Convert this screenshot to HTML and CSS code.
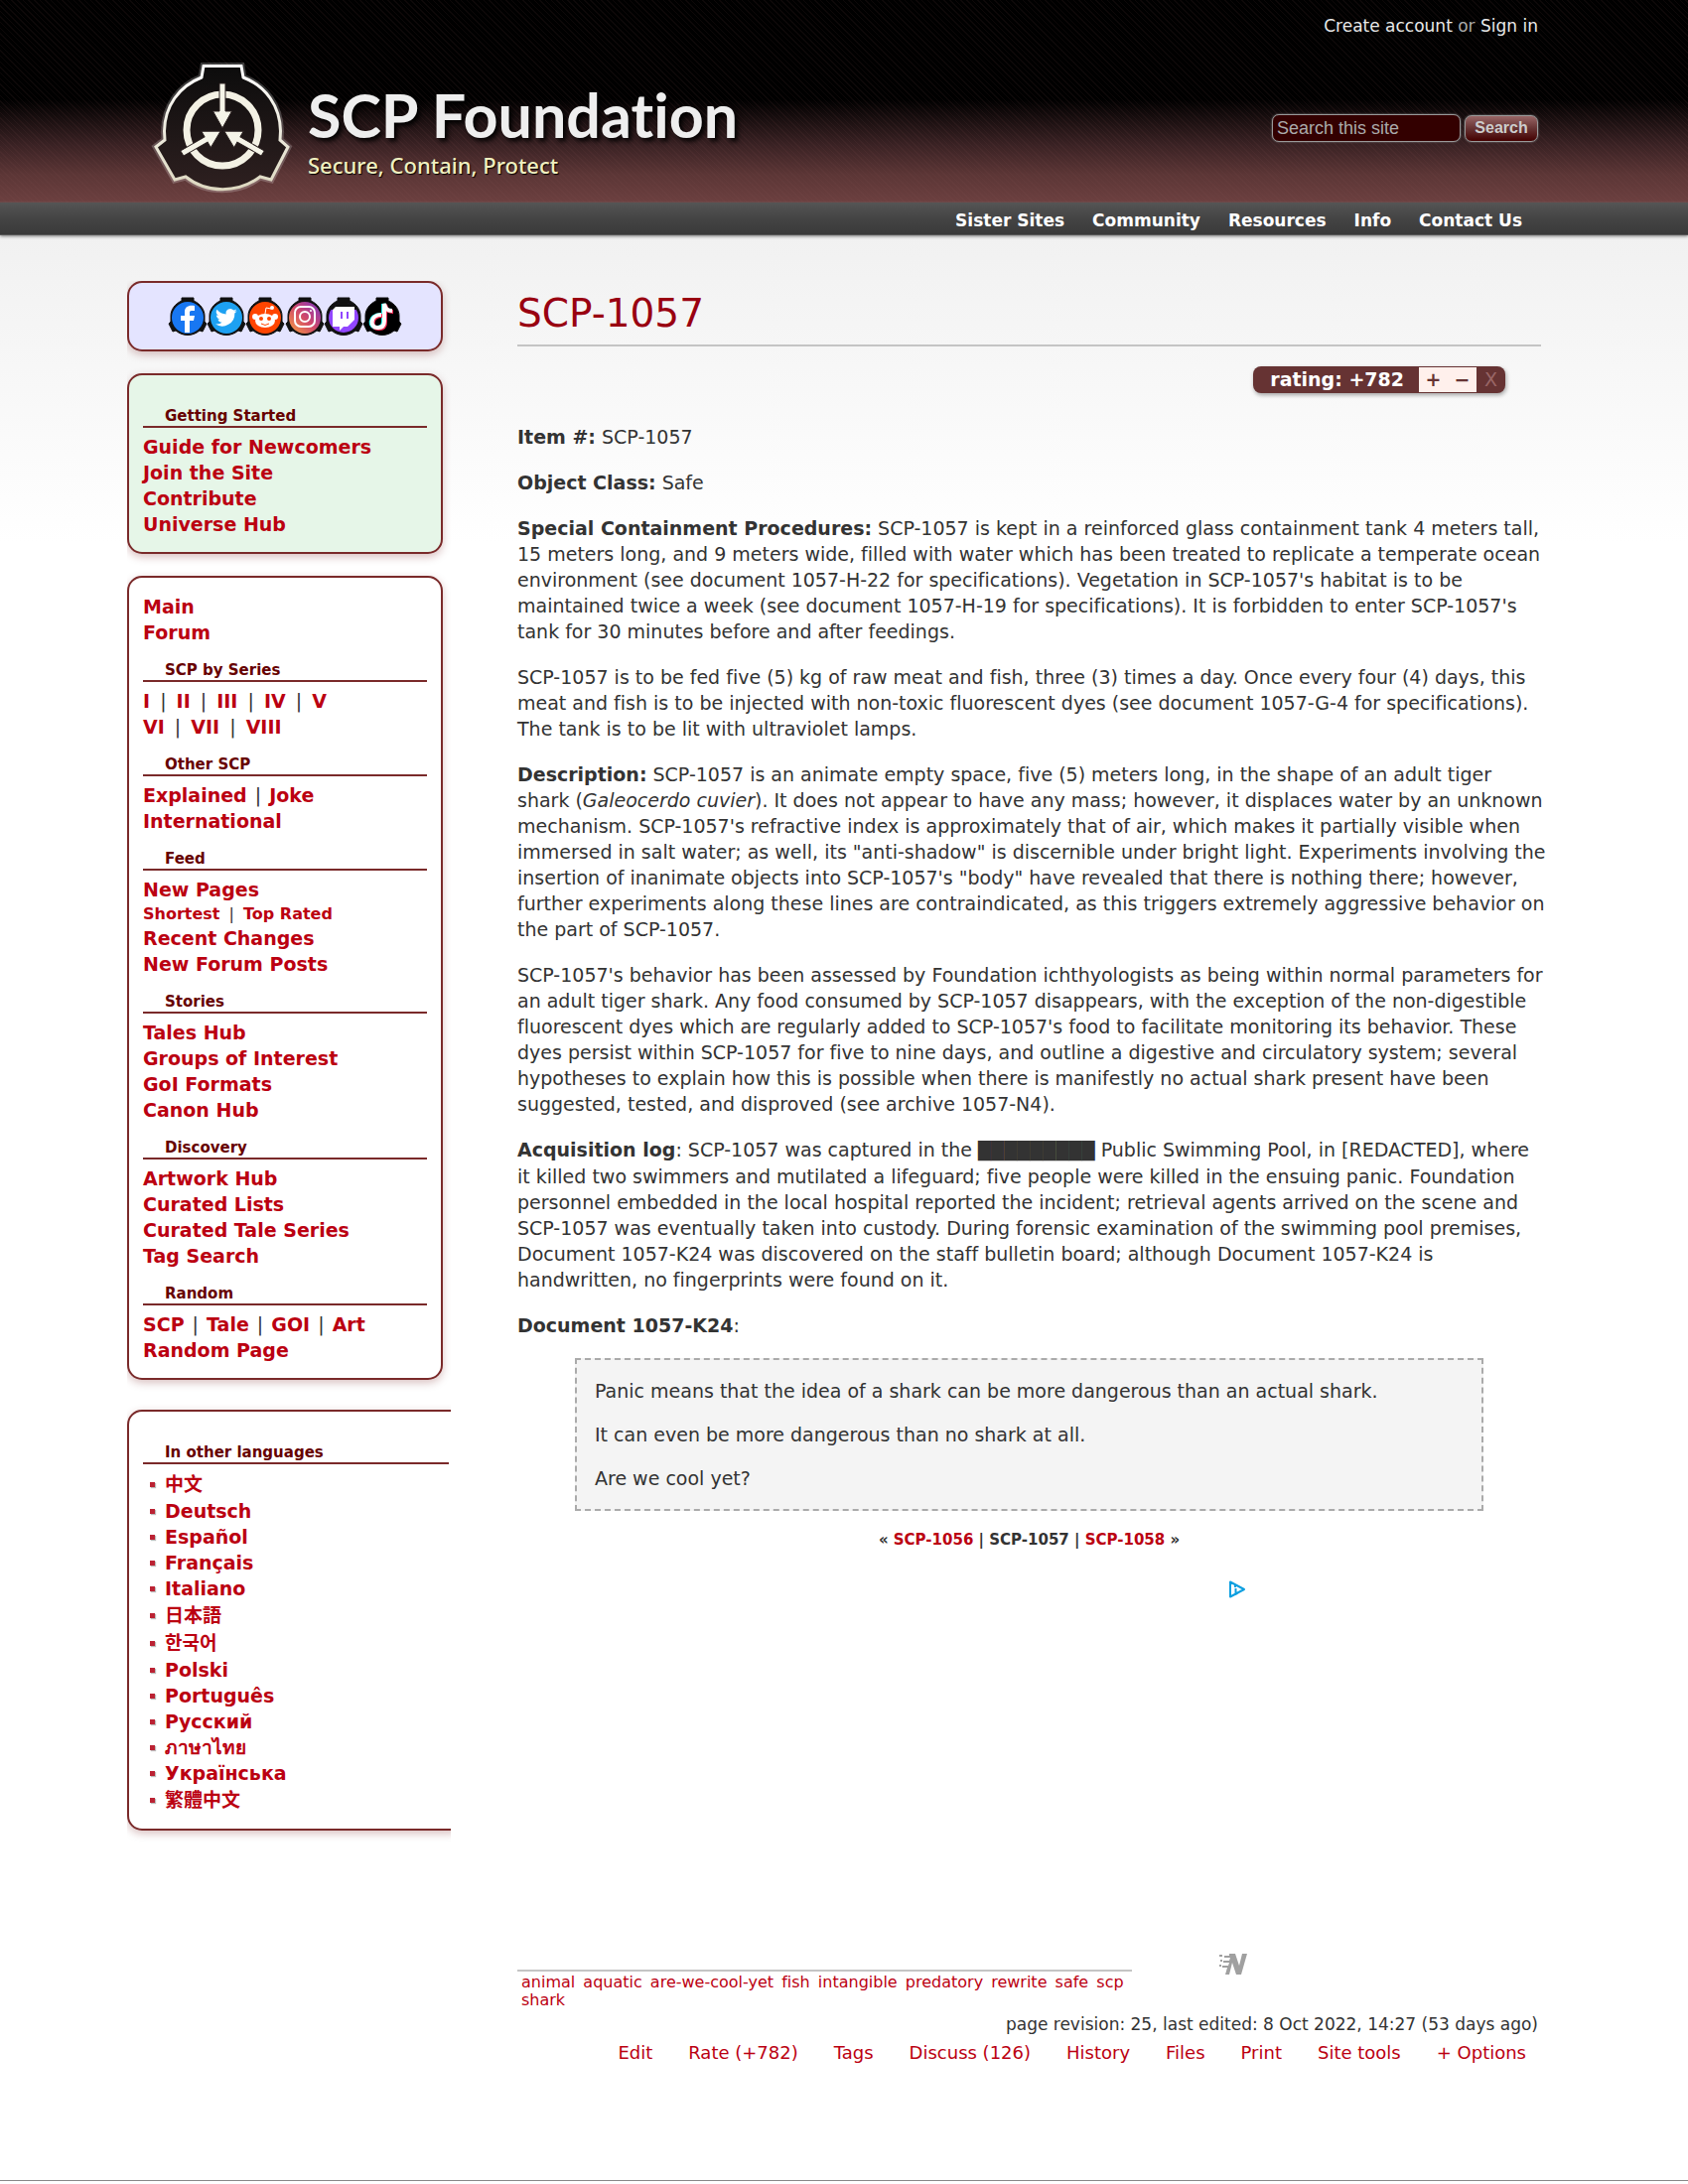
FILE: index.html
```html
<!DOCTYPE html>
<html lang="en">
<head>
<meta charset="utf-8">
<title>SCP-1057 - SCP Foundation</title>
<link rel="stylesheet" href="styles.css">
</head>
<body>
<header class="header">
  <div class="wrap header-inner">
    <a class="brand" href="#">
      <svg class="logo" viewBox="150 58 148 142" aria-hidden="true">
        <defs>
          <linearGradient id="lg" x1="0" y1="0" x2="0" y2="1"><stop offset="0" stop-color="#fff"/><stop offset="1" stop-color="#ddd8c0"/></linearGradient>
          <linearGradient id="lf" x1="0" y1="0" x2="0" y2="1"><stop offset="0" stop-color="#0c0c0c"/><stop offset="1" stop-color="#2e2020"/></linearGradient>
        </defs>
        <path d="M205 66.500H243L245 78C268 87 282 107 282.500 132L282 141L290 148L273 181L262 178C240 195 208 195 187 178L176 181L157 148L166 141L165.500 132C166 107 180 87 203 78Z" fill="none" stroke="#fff" stroke-opacity=".22" stroke-width="7"/>
        <path d="M205 66.500H243L245 78C268 87 282 107 282.500 132L282 141L290 148L273 181L262 178C240 195 208 195 187 178L176 181L157 148L166 141L165.500 132C166 107 180 87 203 78Z" fill="url(#lf)" stroke="url(#lg)" stroke-width="3"/>
        <circle cx="224" cy="131" r="36" fill="none" stroke="#f3f1e4" stroke-width="7"/>
        <g fill="#f5f4e8" stroke="#2a2020" stroke-width="1">
          <path d="M221 84h6v28h6.500L224 129l-9.500-17h6.500z"/>
          <path d="M221 84h6v28h6.500L224 129l-9.500-17h6.500z" transform="rotate(120 224 131)"/>
          <path d="M221 84h6v28h6.500L224 129l-9.500-17h6.500z" transform="rotate(240 224 131)"/>
        </g>
      </svg>
      <span class="brand-text">
        <span class="site-name">SCP Foundation</span>
        <span class="motto">Secure, Contain, Protect</span>
      </span>
    </a>
    <div class="header-side">
      <p class="account"><a href="#">Create account</a> or <a href="#">Sign in</a></p>
      <form class="search">
        <input type="text" class="search-box" aria-label="Search this site" placeholder="Search this site">
        <button type="button" class="search-btn">Search</button>
      </form>
    </div>
  </div>
</header>
<nav class="topbar">
  <div class="wrap topbar-inner">
    <a href="#">Sister Sites</a><a href="#">Community</a><a href="#">Resources</a><a href="#">Info</a><a href="#">Contact Us</a>
  </div>
</nav>
<div class="content">
<div class="wrap columns">
  <aside class="side">
    <section class="box social">
      <svg viewBox="0 0 236 40" class="icons" aria-label="Social media">
        <defs>
          <linearGradient id="ig" x1="1" y1="0" x2="0" y2="1"><stop offset="0" stop-color="#7a35c8"/><stop offset=".5" stop-color="#d0486a"/><stop offset="1" stop-color="#f9a040"/></linearGradient>
          <path id="sh" d="M14 1h12v3c7 3 11 9 11 15v6l2 2-4 8-3-1c-7 6-17 6-24 0l-3 1-4-8 2-2v-6c0-6 4-12 11-15z"/>
        </defs>
        <g fill="#111" stroke="#111" stroke-width="1">
          <use href="#sh"/><use href="#sh" x="39"/><use href="#sh" x="78"/><use href="#sh" x="118"/><use href="#sh" x="157"/><use href="#sh" x="196" fill="#000"/>
        </g>
        <circle cx="20" cy="21" r="16" fill="#1877f2"/><circle cx="59" cy="21" r="16" fill="#1da1f2"/><circle cx="98" cy="21" r="16" fill="#ff4500"/><circle cx="138" cy="21" r="16" fill="url(#ig)"/>
        <path d="M17 36V24h-4v-5h4v-4c0-5 4-7 10-6v5c-4 0-5 0-5 2v3h5l-1 5h-4v12z" fill="#fff"/>
        <path transform="translate(48 10) scale(.9)" d="M24 4.600a10 10 0 0 1-2.800.8 5 5 0 0 0 2.200-2.700 10 10 0 0 1-3.100 1.200 4.900 4.900 0 0 0-8.400 4.500A14 14 0 0 1 1.700 3.100a4.900 4.900 0 0 0 1.500 6.600 5 5 0 0 1-2.200-.6c0 2.300 1.600 4.400 3.900 4.900a5 5 0 0 1-2.200.1 4.900 4.900 0 0 0 4.600 3.400A10 10 0 0 1 0 19.500a14 14 0 0 0 21.500-12.400A10 10 0 0 0 24 4.600z" fill="#fff"/>
        <g fill="#fff"><ellipse cx="98" cy="24" rx="10" ry="7"/><circle cx="88" cy="20" r="3"/><circle cx="108" cy="20" r="3"/><circle cx="105" cy="11" r="2"/></g>
        <path d="M98 17l1-6 5 1" fill="none" stroke="#fff" stroke-width="1"/>
        <g fill="#ff4500"><circle cx="94" cy="22" r="2"/><circle cx="102" cy="22" r="2"/></g><path d="M94 27q4 3 8 0" fill="none" stroke="#ff4500"/>
        <g fill="none" stroke="#fff" stroke-width="2"><rect x="128" y="10" width="20" height="20" rx="6"/><circle cx="138" cy="20" r="5"/></g><circle cx="144" cy="14" r="1" fill="#fff"/>
        <circle cx="177" cy="21" r="15" fill="#9146ff"/><path d="M164 13a15 15 0 0 1 26 0z" fill="#111"/>
        <path d="M166 13l3-3h19v13l-7 7h-4l-4 4v-4h-7z" fill="#fff"/><path d="M175 15v7M181 15v7" stroke="#9146ff" stroke-width="2"/>
        <g fill="none" stroke-width="4"><path d="M214 18c-12 0-12 14-3 13 5 0 6-3 6-7V7c1 5 3 7 8 7" stroke="#25f4ee"/><path d="M216 19c-12 0-12 14-3 13 5 0 6-3 6-7V8c1 5 3 7 8 7" stroke="#fe2c55"/><path d="M215 18c-12 0-12 14-3 13 5 0 6-3 6-7V7c1 5 3 7 8 7" stroke="#fff"/></g>
      </svg>
    </section>
    <section class="box started">
      <h2>Getting Started</h2>
      <a href="#">Guide for Newcomers</a><br><a href="#">Join the Site</a><br><a href="#">Contribute</a><br><a href="#">Universe Hub</a>
    </section>
    <section class="box main-menu">
      <a href="#">Main</a><br><a href="#">Forum</a>
      <h2>SCP by Series</h2>
      <div class="series"><a href="#">I</a> <span class="sep">|</span> <a href="#">II</a> <span class="sep">|</span> <a href="#">III</a> <span class="sep">|</span> <a href="#">IV</a> <span class="sep">|</span> <a href="#">V</a><br><a href="#">VI</a> <span class="sep">|</span> <a href="#">VII</a> <span class="sep">|</span> <a href="#">VIII</a></div>
      <h2>Other SCP</h2>
      <a href="#">Explained</a> <span class="sep">|</span> <a href="#">Joke</a><br><a href="#">International</a>
      <h2>Feed</h2>
      <a href="#">New Pages</a>
      <div class="small"><a href="#">Shortest</a> <span class="sep">|</span> <a href="#">Top Rated</a></div>
      <a href="#">Recent Changes</a><br><a href="#">New Forum Posts</a>
      <h2>Stories</h2>
      <a href="#">Tales Hub</a><br><a href="#">Groups of Interest</a><br><a href="#">GoI Formats</a><br><a href="#">Canon Hub</a>
      <h2>Discovery</h2>
      <a href="#">Artwork Hub</a><br><a href="#">Curated Lists</a><br><a href="#">Curated Tale Series</a><br><a href="#">Tag Search</a>
      <h2>Random</h2>
      <a href="#">SCP</a> <span class="sep">|</span> <a href="#">Tale</a> <span class="sep">|</span> <a href="#">GOI</a> <span class="sep">|</span> <a href="#">Art</a><br><a href="#">Random Page</a>
    </section>
    <section class="box languages">
      <h2>In other languages</h2>
      <ul>
        <li class="tall" lang="zh-Hans"><a href="#">中文</a></li>
        <li><a href="#">Deutsch</a></li>
        <li><a href="#">Español</a></li>
        <li><a href="#">Français</a></li>
        <li><a href="#">Italiano</a></li>
        <li class="tall" lang="ja"><a href="#">日本語</a></li>
        <li class="tall" lang="ko"><a href="#">한국어</a></li>
        <li><a href="#">Polski</a></li>
        <li><a href="#">Português</a></li>
        <li><a href="#">Русский</a></li>
        <li><a href="#">ภาษาไทย</a></li>
        <li><a href="#">Українська</a></li>
        <li class="tall" lang="zh-Hant"><a href="#">繁體中文</a></li>
      </ul>
    </section>
  </aside>
  <main class="main">
    <h1>SCP-1057</h1>
    <div class="rate-row">
      <div class="rating"><span class="score">rating: +782</span><button type="button" class="vote">+</button><button type="button" class="vote">−</button><button type="button" class="cancel">X</button></div>
    </div>
    <article class="article">
      <p><strong>Item #:</strong> SCP-1057</p>
      <p><strong>Object Class:</strong> Safe</p>
      <p><strong>Special Containment Procedures:</strong> SCP-1057 is kept in a reinforced glass containment tank 4 meters tall,<br>15 meters long, and 9 meters wide, filled with water which has been treated to replicate a temperate ocean<br>environment (see document 1057-H-22 for specifications). Vegetation in SCP-1057's habitat is to be<br>maintained twice a week (see document 1057-H-19 for specifications). It is forbidden to enter SCP-1057's<br>tank for 30 minutes before and after feedings.</p>
      <p>SCP-1057 is to be fed five (5) kg of raw meat and fish, three (3) times a day. Once every four (4) days, this<br>meat and fish is to be injected with non-toxic fluorescent dyes (see document 1057-G-4 for specifications).<br>The tank is to be lit with ultraviolet lamps.</p>
      <p><strong>Description:</strong> SCP-1057 is an animate empty space, five (5) meters long, in the shape of an adult tiger<br>shark (<em>Galeocerdo cuvier</em>). It does not appear to have any mass; however, it displaces water by an unknown<br>mechanism. SCP-1057's refractive index is approximately that of air, which makes it partially visible when<br>immersed in salt water; as well, its "anti-shadow" is discernible under bright light. Experiments involving the<br>insertion of inanimate objects into SCP-1057's "body" have revealed that there is nothing there; however,<br>further experiments along these lines are contraindicated, as this triggers extremely aggressive behavior on<br>the part of SCP-1057.</p>
      <p>SCP-1057's behavior has been assessed by Foundation ichthyologists as being within normal parameters for<br>an adult tiger shark. Any food consumed by SCP-1057 disappears, with the exception of the non-digestible<br>fluorescent dyes which are regularly added to SCP-1057's food to facilitate monitoring its behavior. These<br>dyes persist within SCP-1057 for five to nine days, and outline a digestive and circulatory system; several<br>hypotheses to explain how this is possible when there is manifestly no actual shark present have been<br>suggested, tested, and disproved (see archive 1057-N4).</p>
      <p><strong>Acquisition log</strong>: SCP-1057 was captured in the <span class="redacted">█████████</span> Public Swimming Pool, in [REDACTED], where<br>it killed two swimmers and mutilated a lifeguard; five people were killed in the ensuing panic. Foundation<br>personnel embedded in the local hospital reported the incident; retrieval agents arrived on the scene and<br>SCP-1057 was eventually taken into custody. During forensic examination of the swimming pool premises,<br>Document 1057-K24 was discovered on the staff bulletin board; although Document 1057-K24 is<br>handwritten, no fingerprints were found on it.</p>
      <p><strong>Document 1057-K24</strong>:</p>
      <blockquote>
        <p>Panic means that the idea of a shark can be more dangerous than an actual shark.</p>
        <p>It can even be more dangerous than no shark at all.</p>
        <p>Are we cool yet?</p>
      </blockquote>
      <div class="pager">« <a href="#">SCP-1056</a> | SCP-1057 | <a href="#">SCP-1058</a> »</div>
    </article>
    <div class="ad">
      <svg class="choices" viewBox="0 0 18 18" aria-hidden="true"><path d="M2 1.500v15L16 9zM7.500 8v6l4-2.500" fill="none" stroke="#0c9fe0" stroke-width="2" stroke-linejoin="round"/><rect x="6" y="5" width="2" height="2" fill="#0c9fe0"/></svg>
    </div>
    <div class="tag-row">
      <div class="tags"><a href="#">animal</a> <a href="#">aquatic</a> <a href="#">are-we-cool-yet</a> <a href="#">fish</a> <a href="#">intangible</a> <a href="#">predatory</a> <a href="#">rewrite</a> <a href="#">safe</a> <a href="#">scp</a><br><a href="#">shark</a></div>
      <svg class="nlogo" viewBox="0 0 28 22" aria-hidden="true"><path d="M10 0h6l4 12 3-12h5l-6 21h-5l-4-12-3 12H6l2-7H3v-2h6l1-3H4V7h6l1-3H5V2h5zM0 1h3v2H0zM1 6h2v2H1zM0 11h2v2H0z" fill="#a0a0a0"/></svg>
    </div>
    <p class="revision">page revision: 25, last edited: 8 Oct 2022, 14:27 (53 days ago)</p>
    <div class="options"><a href="#">Edit</a><a href="#">Rate (+782)</a><a href="#">Tags</a><a href="#">Discuss (126)</a><a href="#">History</a><a href="#">Files</a><a href="#">Print</a><a href="#">Site tools</a><a href="#">+ Options</a></div>
  </main>
</div>
</div>
<footer class="footer"></footer>
</body>
</html>
```
FILE: styles.css
```css
* { box-sizing: border-box; }
body {
  margin: 0;
  background: #fff;
  color: #333;
  font-family: Verdana, "DejaVu Sans", "Noto Sans CJK SC", sans-serif;
  font-size: 19px;
  line-height: 26px;
  font-variant-ligatures: none;
}
a { color: #b01; text-decoration: none; }
p, h1, h2, ul { margin: 0; padding: 0; }
.wrap { max-width: 1444px; margin: 0 auto; padding-right: 20px; }

.header {
  background:
    repeating-linear-gradient(45deg, rgba(130, 80, 80, .1) 0 1px, transparent 1px 4px),
    linear-gradient(#000 0, #000 100px, #3a2224 146px, #5c3636 176px, #6c4040 204px);
}
.header-inner { display: flex; justify-content: space-between; height: 204px; }
.brand { display: flex; padding: 58px 0 0 22px; gap: 12px; }
.logo { width: 148px; height: 142px; }
.brand-text { display: flex; flex-direction: column; padding-top: 25px; }
.site-name {
  color: #eee;
  font: bold 61px/66px Lato, sans-serif;
  font-variant-ligatures: none;
  text-shadow: 3px 3px 5px #000;
}
.motto {
  color: #f0f0c0;
  font: 500 22px/34px "Noto Sans", sans-serif;
  text-shadow: 1px 1px 1px #000;
}
.header-side { display: flex; flex-direction: column; align-items: flex-end; padding: 13px 3px 0 0; }
.account { color: #aaa; font-size: 17px; }
.account a { color: #e8e8e8; }
.search { display: flex; align-items: center; gap: 4px; margin-top: 76px; }
.search-box {
  width: 190px; height: 28px; padding: 0 4px;
  border: 1px solid #999; border-radius: 7px;
  background: #300; color: #aaa;
  font: 18px "Liberation Sans", sans-serif;
  box-shadow: 0 0 2px #888;
}
.search-box::placeholder { color: #aaa; opacity: 1; }
.search-btn {
  width: 74px; height: 27px; padding: 0;
  border: 1px solid #999; border-radius: 7px;
  background: linear-gradient(#966, #633 50%, #400);
  color: #ccc;
  font: bold 16px "Liberation Sans", sans-serif;
  box-shadow: 0 0 2px #888;
}

.topbar { background: linear-gradient(#555, #444 50%, #3a3a3a); border-bottom: 1px solid #555; box-shadow: 0 1px 3px #777; position: relative; }
.topbar-inner { display: flex; justify-content: flex-end; }
.topbar a {
  padding: 5px 14px 1px;
  color: #fff; font-size: 17px; font-weight: bold;
}
.topbar a:last-child { margin-right: 5px; }

.content { background: linear-gradient(#f1f1f1, #fff 310px); padding: 46px 0 115px; }
.columns { display: flex; }
.side { flex: 0 0 326px; overflow: hidden; padding-bottom: 12px; }
.box {
  width: 318px; margin-bottom: 22px; padding: 16px 14px 15px;
  border: 2px solid #7a2a2a; border-radius: 15px;
  background: #fff;
  box-shadow: 0 3px 9px rgba(102, 0, 0, .25);
}
.box a { font-weight: bold; }
.box h2 {
  margin: 15px 0 6px; padding-left: 22px;
  border-bottom: 2px solid #7a2a2a;
  color: #600; font-size: 15px; line-height: 20px;
}
.sep { padding: 0 2px; }
.series .sep { padding: 0 4px; }
.social { display: flex; justify-content: center; background: #e4e4ff; height: 71px; padding: 14px 0; }
.icons { flex: none; width: 236px; height: 40px; }
.started { background: #e6f6e8; }
.small { font-size: 16px; line-height: 23px; }
.small .sep { padding: 0 4px; }
.main-menu { margin-bottom: 30px; }
.languages { width: 340px; margin-bottom: 0; }
.languages ul { list-style: none; }
.languages li { display: flex; align-items: center; }
.languages li::before {
  content: ""; width: 5px; height: 5px; margin: 0 10px 0 7px;
  background: #b23; box-shadow: 1px 1px 1px #bbb;
}
.languages .tall { line-height: 28px; }

.main { flex: 1; min-width: 0; margin-left: 67px; }
h1 {
  padding: 8px 0 6px;
  border-bottom: 2px solid #c4c4c4;
  color: #901; font-size: 39px; font-weight: normal; line-height: 50px;
}
.rate-row { display: flex; justify-content: flex-end; padding: 20px 36px 31px 0; }
.rating {
  display: flex; height: 27px; padding: 1px 0;
  border-radius: 8px; background: #633;
  box-shadow: 1px 2px 4px rgba(0, 0, 0, .35);
  color: #fff; font-weight: bold; line-height: 25px;
}
.score { padding: 0 15px 0 17px; }
.rating button { width: 29px; padding: 0; border: 0; font: bold 19px/25px "DejaVu Sans", sans-serif; }
.vote { background: #fff0ec; color: #633; }
.rating .cancel { background: none; color: #966; font-weight: normal; }
.article p { margin-bottom: 20px; white-space: nowrap; }
.redacted { font-size: 17px; }
blockquote {
  margin: 0 58px; padding: 18px;
  border: 2px dashed #aaa; background: #f4f4f4;
}
.article blockquote p { margin-bottom: 18px; }
.article blockquote p:last-child { margin-bottom: 0; }
.pager { padding-top: 16px; text-align: center; font-size: 15px; font-weight: bold; }
.ad { display: flex; justify-content: flex-end; height: 404px; padding: 28px 297px 0 0; }
.choices { width: 18px; height: 18px; }
.tag-row { display: flex; align-items: flex-start; }
.tags {
  flex: 0 0 60%; margin-top: 16px; padding: 2px 4px;
  border-top: 2px solid #c4c4c4;
  font-size: 16px; line-height: 18px; word-spacing: 3px; white-space: nowrap;
}
.nlogo { width: 28px; height: 22px; margin-left: 88px; }
.revision { padding-right: 3px; text-align: right; font-size: 17px; }
.options { display: flex; justify-content: flex-end; gap: 36px; padding: 3px 15px 0 0; font-size: 18px; }
.footer { border-top: 1px solid #888; }
```
